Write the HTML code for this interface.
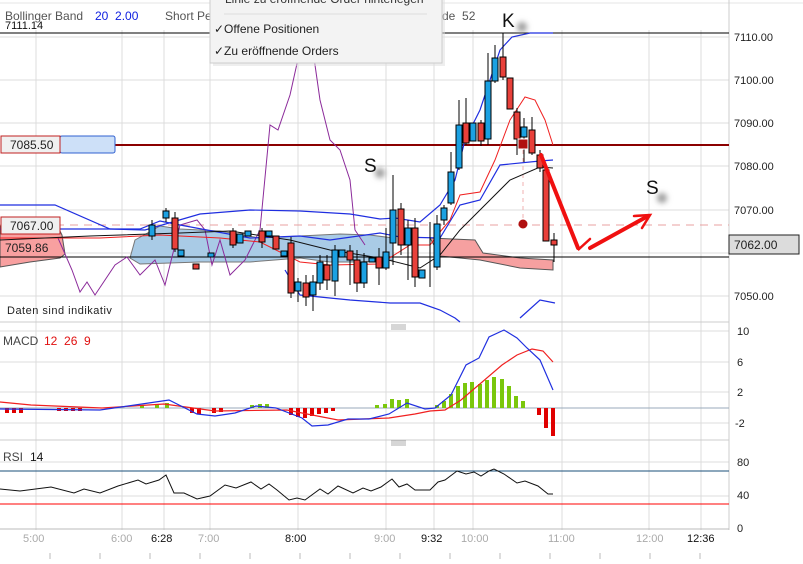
<!DOCTYPE html>
<html><head><meta charset="utf-8"><style>
html,body{margin:0;padding:0;background:#fff;}
body{width:803px;height:559px;overflow:hidden;position:relative;font-family:"Liberation Sans",sans-serif;}
svg text{font-family:"Liberation Sans",sans-serif;}
</style></head><body>
<svg width="803" height="559" viewBox="0 0 803 559" xmlns="http://www.w3.org/2000/svg">
<defs><filter id="bl" x="-1" y="-1" width="3" height="3"><feGaussianBlur stdDeviation="3"/></filter></defs>
<rect width="803" height="559" fill="#fff"/>
<line x1="0" y1="3" x2="803" y2="3" stroke="#e4e4e4"/>
<g stroke="#dcdcdc" stroke-width="1">
<line x1="36" y1="30" x2="36" y2="530"/><line x1="122" y1="30" x2="122" y2="530"/><line x1="164" y1="30" x2="164" y2="530"/><line x1="210" y1="30" x2="210" y2="530"/><line x1="298" y1="30" x2="298" y2="530"/><line x1="386" y1="30" x2="386" y2="530"/><line x1="434" y1="30" x2="434" y2="530"/><line x1="473" y1="30" x2="473" y2="530"/><line x1="562" y1="30" x2="562" y2="530"/><line x1="649" y1="30" x2="649" y2="530"/><line x1="701" y1="30" x2="701" y2="530"/>
<line x1="0" y1="37" x2="729" y2="37"/><line x1="0" y1="80" x2="729" y2="80"/><line x1="0" y1="123" x2="729" y2="123"/><line x1="0" y1="166" x2="729" y2="166"/><line x1="0" y1="210" x2="729" y2="210"/><line x1="0" y1="253" x2="729" y2="253"/><line x1="0" y1="296" x2="729" y2="296"/>
<line x1="0" y1="331" x2="729" y2="331"/><line x1="0" y1="362" x2="729" y2="362"/><line x1="0" y1="392" x2="729" y2="392"/><line x1="0" y1="423" x2="729" y2="423"/>
<line x1="0" y1="462" x2="729" y2="462"/><line x1="0" y1="496" x2="729" y2="496"/>
</g>
<line x1="729" y1="0" x2="729" y2="530" stroke="#ccc"/>
<line x1="0" y1="322" x2="729" y2="322" stroke="#ccc"/><line x1="0" y1="440" x2="729" y2="440" stroke="#ccc"/>
<line x1="0" y1="529" x2="729" y2="529" stroke="#bbb"/>
<g stroke="#999" stroke-width="0.8"><line x1="391" y1="325" x2="406" y2="325"/><line x1="391" y1="327" x2="406" y2="327"/><line x1="391" y1="329" x2="406" y2="329"/><line x1="391" y1="441" x2="406" y2="441"/><line x1="391" y1="443" x2="406" y2="443"/><line x1="391" y1="445" x2="406" y2="445"/></g>

<polygon points="0,225 30,224 60,231 62,235 65,254 60,258 30,262 0,267" fill="#f8a0a0" stroke="#555" stroke-width="1"/>
<polygon points="135,240 160,226 180,229 220,231 260,238 300,236 340,234 370,235 393,238 393,260 360,262 330,262 300,258 250,262 200,262 140,264 130,258" fill="#a9cbe6" stroke="#777" stroke-width="1"/>
<polygon points="430,238 475,240 483,253 520,258 553,260 553,270 520,268 480,260 440,256" fill="#f6a0a0" stroke="#555"/>
<line x1="0" y1="33" x2="729" y2="33" stroke="#000"/>
<line x1="0" y1="257" x2="729" y2="257" stroke="#000"/>
<line x1="0" y1="225" x2="729" y2="225" stroke="#e8a0a0" stroke-dasharray="8,6"/>
<line x1="115" y1="145" x2="729" y2="145" stroke="#8b0000" stroke-width="2"/>
<line x1="523" y1="150" x2="523" y2="225" stroke="#f0b0b0" stroke-dasharray="4,4"/>
<polyline fill="none" stroke="#8b2a9a" stroke-width="1" points="58,238 72,270 80,292 87,282 95,295 115,265 127,257 140,275 155,260 165,285 180,225 197,220 205,230 212,265 220,240 230,275 245,260 250,250 260,230 270,125 278,130 290,95 300,50 305,55 310,30 320,100 330,140 340,150 350,180 355,230 365,245"/>
<polyline fill="none" stroke="#1f2ee0" stroke-width="1.2" points="0,205 55,205 110,229 145,230 200,214 250,210 300,211 350,214 380,219 395,218 420,222 440,205 455,180 465,140 480,110 490,80 500,50 512,37 530,33 553,33"/>
<polyline fill="none" stroke="#1f2ee0" stroke-width="1.2" points="0,229 140,229 160,221 180,225 250,238 300,236 330,240 380,233 400,237 440,238 460,205 480,200 500,165 540,161 553,160"/>
<polyline fill="none" stroke="#1f2ee0" stroke-width="1.2" points="285,270 300,295 350,300 390,303 420,303 440,310 455,318 460,322"/>
<polyline fill="none" stroke="#1f2ee0" stroke-width="1.2" points="520,318 540,300 555,303"/>
<polyline fill="none" stroke="#f02020" stroke-width="1" points="0,238 100,238 160,235 220,238 260,242 300,262 330,265 380,264 410,245 430,245 440,232 450,220 460,195 480,192 495,160 510,120 525,97 535,100 545,120 553,145"/>
<polyline fill="none" stroke="#111" stroke-width="1" points="0,240 90,236 180,233 230,231 290,240 330,250 380,258 420,268 440,255 460,230 490,200 510,180 540,167 553,168"/>
<g stroke="#000" stroke-width="1">
<line x1="166" y1="208" x2="166" y2="222"/><rect x="163" y="211" width="6" height="7" fill="#1ba1e2"/>
<line x1="175" y1="212" x2="175" y2="252"/><rect x="172" y="218" width="6" height="31" fill="#e8403a"/>
<line x1="152" y1="220" x2="152" y2="240"/><rect x="149" y="225" width="6" height="11" fill="#1ba1e2"/>
<rect x="178" y="250" width="6" height="6" fill="#1ba1e2"/>
<rect x="193" y="264" width="6" height="5" fill="#e8403a"/>
<rect x="208" y="253" width="6" height="4" fill="#1ba1e2"/>
<line x1="233" y1="228" x2="233" y2="248"/><rect x="230" y="231" width="6" height="14" fill="#e8403a"/>
<rect x="237" y="234" width="6" height="9" fill="#1ba1e2"/>
<rect x="245" y="231" width="6" height="5" fill="#1ba1e2"/>
<line x1="262" y1="228" x2="262" y2="248"/><rect x="259" y="231" width="6" height="11" fill="#e8403a"/>
<rect x="266" y="231" width="6" height="5" fill="#1ba1e2"/>
<rect x="273" y="236" width="6" height="13" fill="#e8403a"/>
<rect x="281" y="251" width="6" height="5" fill="#1ba1e2"/>
<line x1="291" y1="237" x2="291" y2="298"/><rect x="288" y="243" width="6" height="50" fill="#e8403a"/>
<line x1="298" y1="278" x2="298" y2="302"/><rect x="295" y="282" width="6" height="9" fill="#1ba1e2"/>
<line x1="306" y1="275" x2="306" y2="306"/><rect x="303" y="283" width="6" height="14" fill="#e8403a"/>
<line x1="313" y1="275" x2="313" y2="311"/><rect x="310" y="282" width="6" height="13" fill="#1ba1e2"/>
<line x1="320" y1="255" x2="320" y2="290"/><rect x="317" y="262" width="6" height="21" fill="#1ba1e2"/>
<line x1="327" y1="255" x2="327" y2="290"/><rect x="324" y="265" width="6" height="15" fill="#e8403a"/>
<line x1="335" y1="245" x2="335" y2="296"/><rect x="332" y="250" width="6" height="31" fill="#1ba1e2"/>
<rect x="339" y="250" width="6" height="7" fill="#1ba1e2"/>
<line x1="350" y1="245" x2="350" y2="285"/><rect x="347" y="251" width="6" height="9" fill="#e8403a"/>
<line x1="357" y1="250" x2="357" y2="292"/><rect x="354" y="260" width="6" height="23" fill="#e8403a"/>
<line x1="364" y1="253" x2="364" y2="288"/><rect x="361" y="262" width="6" height="21" fill="#1ba1e2"/>
<rect x="369" y="258" width="6" height="4" fill="#1ba1e2"/>
<line x1="379" y1="248" x2="379" y2="285"/><rect x="376" y="257" width="6" height="11" fill="#e8403a"/>
<line x1="386" y1="228" x2="386" y2="270"/><rect x="383" y="252" width="6" height="16" fill="#1ba1e2"/>
<line x1="393" y1="175" x2="393" y2="265"/><rect x="390" y="210" width="6" height="33" fill="#1ba1e2"/>
<line x1="401" y1="203" x2="401" y2="255"/><rect x="398" y="209" width="6" height="36" fill="#e8403a"/>
<line x1="408" y1="220" x2="408" y2="280"/><rect x="405" y="228" width="6" height="17" fill="#1ba1e2"/>
<line x1="415" y1="218" x2="415" y2="287"/><rect x="412" y="228" width="6" height="49" fill="#e8403a"/>
<rect x="419" y="270" width="6" height="8" fill="#1ba1e2"/>
<line x1="430" y1="222" x2="430" y2="287"/>
<line x1="437" y1="215" x2="437" y2="270"/><rect x="434" y="224" width="6" height="43" fill="#1ba1e2"/>
<line x1="444" y1="205" x2="444" y2="225"/><rect x="441" y="208" width="6" height="12" fill="#1ba1e2"/>
<line x1="451" y1="152" x2="451" y2="205"/><rect x="448" y="172" width="6" height="31" fill="#1ba1e2"/>
<line x1="459" y1="100" x2="459" y2="170"/><rect x="456" y="125" width="6" height="43" fill="#1ba1e2"/>
<line x1="466" y1="98" x2="466" y2="145"/><rect x="463" y="123" width="6" height="20" fill="#e8403a"/>
<rect x="470" y="123" width="6" height="18" fill="#1ba1e2"/>
<line x1="481" y1="120" x2="481" y2="146"/><rect x="478" y="123" width="6" height="18" fill="#e8403a"/>
<line x1="488" y1="53" x2="488" y2="145"/><rect x="485" y="81" width="6" height="58" fill="#1ba1e2"/>
<line x1="495" y1="45" x2="495" y2="83"/><rect x="492" y="58" width="6" height="23" fill="#1ba1e2"/>
<line x1="503" y1="33" x2="503" y2="80"/><rect x="500" y="57" width="6" height="20" fill="#e8403a"/>
<rect x="507" y="78" width="6" height="31" fill="#e8403a"/>
<line x1="517" y1="108" x2="517" y2="155"/><rect x="514" y="112" width="6" height="27" fill="#e8403a"/>
<line x1="524" y1="118" x2="524" y2="162"/><rect x="521" y="127" width="6" height="10" fill="#1ba1e2"/>
<line x1="532" y1="117" x2="532" y2="155"/><rect x="529" y="130" width="6" height="23" fill="#e8403a"/>
<line x1="540" y1="150" x2="540" y2="172"/><rect x="537" y="155" width="6" height="13" fill="#e8403a"/>
<rect x="543" y="170" width="6" height="71" fill="#e8403a"/>
<line x1="554" y1="233" x2="554" y2="262"/><rect x="551" y="240" width="6" height="5" fill="#e8403a"/>
</g>
<rect x="518" y="139" width="10" height="10" fill="#b01010" stroke="#fff"/>
<circle cx="523" cy="224" r="4.5" fill="#b01010"/>
<g stroke="#f01010" stroke-width="4" fill="none" stroke-linecap="round">
<line x1="541" y1="155" x2="578" y2="248"/><polyline points="573,234 579,249 590,239" stroke-width="2.5"/>
<line x1="590" y1="248" x2="648" y2="216"/><polyline points="634,216 650,215 642,228" stroke-width="2.5"/>
</g>
<circle cx="380" cy="173" r="5" fill="#999" filter="url(#bl)"/><text x="364" y="172" font-size="19" fill="#111">S</text>
<circle cx="662" cy="198" r="5" fill="#999" filter="url(#bl)"/><text x="646" y="194" font-size="19" fill="#111">S</text>
<circle cx="522" cy="27" r="5" fill="#999" filter="url(#bl)"/><text x="502" y="27" font-size="19" fill="#111">K</text>
<rect x="60" y="136" width="55" height="17" rx="2" fill="#cde0f8" stroke="#3060d0"/>
<rect x="1" y="136" width="59" height="17" fill="#f0f0f0" stroke="#c02020"/>
<text x="10" y="149" font-size="12" fill="#222">7085.50</text>
<rect x="1" y="217" width="59" height="17" fill="#f0f0f0" stroke="#c02020"/>
<text x="10" y="230" font-size="12" fill="#222">7067.00</text>
<text x="5" y="252" font-size="12" fill="#222">7059.86</text>
<text x="5" y="29" font-size="11" fill="#111">7111.14</text>
<text x="7" y="314" font-size="11" fill="#222" letter-spacing="0.5">Daten sind indikativ</text>
<g font-size="11" fill="#222">
<text x="734" y="41">7110.00</text><text x="734" y="84">7100.00</text><text x="734" y="127">7090.00</text><text x="734" y="170">7080.00</text><text x="734" y="214">7070.00</text><text x="734" y="300">7050.00</text>
<text x="737" y="335">10</text><text x="737" y="366">6</text><text x="737" y="396">2</text><text x="735" y="427">-2</text>
<text x="737" y="466">80</text><text x="737" y="499">40</text><text x="737" y="532">0</text>
</g>
<rect x="729" y="235" width="70" height="19" fill="#dcdcdc" stroke="#222"/>
<text x="734" y="249" font-size="12" fill="#222">7062.00</text>
<text x="5" y="20" font-size="12" fill="#555">Bollinger Band</text>
<text x="95" y="20" font-size="12" fill="#1020e0">20&#160;&#160;2.00</text>
<text x="165" y="20" font-size="12" fill="#555">Short Pe</text>
<text x="442" y="20" font-size="12" fill="#555">de&#160;&#160;52</text>
<rect x="213" y="-2" width="232" height="68" fill="#ddd" opacity="0.5"/>
<rect x="210" y="-2" width="232" height="65" fill="#f3f3f3" stroke="#ccc"/>
<text x="225" y="3" font-size="12" fill="#333">Linie zu eröffnende Order hinterlegen</text>
<line x1="224" y1="14" x2="427" y2="14" stroke="#ddd"/>
<text x="214" y="33" font-size="12" fill="#222">✓Offene Positionen</text>
<text x="214" y="55" font-size="12" fill="#222">✓Zu eröffnende Orders</text>

<text x="3" y="345" font-size="12" fill="#444">MACD</text><text x="44" y="345" font-size="12" fill="#e01010">12&#160;&#160;26&#160;&#160;9</text>
<line x1="0" y1="408" x2="729" y2="408" stroke="#9ab"/>
<g fill="#e00000">
<rect x="5" y="408" width="4" height="5"/><rect x="12" y="408" width="4" height="5"/><rect x="19" y="408" width="4" height="5"/>
<rect x="57" y="408" width="4" height="3"/><rect x="64" y="408" width="4" height="3"/><rect x="71" y="408" width="4" height="3"/><rect x="78" y="408" width="4" height="3"/>
<rect x="190" y="408" width="4" height="5"/><rect x="197" y="408" width="4" height="6"/><rect x="212" y="408" width="4" height="5"/><rect x="219" y="408" width="4" height="4"/>
<rect x="289" y="408" width="4" height="7"/><rect x="296" y="408" width="4" height="9"/><rect x="303" y="408" width="4" height="10"/><rect x="310" y="408" width="4" height="8"/><rect x="317" y="408" width="4" height="6"/><rect x="324" y="408" width="4" height="5"/><rect x="331" y="408" width="4" height="3"/>
<rect x="537" y="408" width="4" height="7"/><rect x="544" y="408" width="4" height="20"/><rect x="551" y="408" width="4" height="28"/>
</g>
<g fill="#7ac70c">
<rect x="140" y="405" width="4" height="3"/><rect x="155" y="404" width="4" height="4"/><rect x="165" y="403" width="4" height="5"/>
<rect x="250" y="405" width="4" height="3"/><rect x="258" y="404" width="4" height="4"/><rect x="265" y="404" width="4" height="4"/>
<rect x="375" y="405" width="4" height="3"/><rect x="383" y="404" width="4" height="4"/><rect x="390" y="399" width="4" height="9"/><rect x="397" y="400" width="4" height="8"/><rect x="405" y="399" width="4" height="9"/>
<rect x="435" y="405" width="4" height="3"/><rect x="442" y="401" width="4" height="7"/><rect x="449" y="394" width="4" height="14"/><rect x="456" y="386" width="4" height="22"/><rect x="463" y="383" width="4" height="25"/><rect x="470" y="382" width="4" height="26"/><rect x="478" y="384" width="4" height="24"/><rect x="485" y="380" width="4" height="28"/><rect x="492" y="377" width="4" height="31"/><rect x="500" y="379" width="4" height="29"/><rect x="507" y="386" width="4" height="22"/><rect x="514" y="396" width="4" height="12"/><rect x="521" y="401" width="4" height="7"/>
</g>
<polyline fill="none" stroke="#f02020" stroke-width="1.2" points="0,402 31,405 102,408 164,404 215,411 287,410 307,414 338,420 389,418 415,414 430,411 445,410 461,400 481,383 502,365 517,355 532,349 543,351 553,362"/>
<polyline fill="none" stroke="#2030e0" stroke-width="1.2" points="0,409 100,410 135,405 169,400 197,414 215,416 235,413 256,406 276,408 302,418 312,426 328,425 348,419 369,419 389,414 407,403 425,409 435,408 451,395 466,365 479,358 489,337 504,330 517,338 527,348 540,360 553,390"/>
<text x="3" y="461" font-size="12" fill="#444">RSI</text><text x="30" y="461" font-size="12" fill="#111">14</text>
<line x1="0" y1="471" x2="729" y2="471" stroke="#1a4f7a"/>
<line x1="0" y1="504" x2="729" y2="504" stroke="#f00"/>
<polyline fill="none" stroke="#111" stroke-width="1" points="0,489 20,491 51,487 74,493 84,489 100,493 118,486 138,480 146,484 159,480 166,475 174,493 184,493 197,499 210,496 225,485 236,488 251,482 261,489 269,484 277,490 289,500 297,498 305,500 320,489 328,494 338,486 353,493 363,488 371,491 381,487 392,479 399,487 407,484 415,490 430,490 438,482 445,480 457,471 466,474 474,472 481,476 489,471 494,469 504,474 517,483 525,481 538,486 548,494 553,494"/>
<g font-size="11" fill="#aaa">
<text x="23" y="542">5:00</text><text x="111" y="542">6:00</text><text x="198" y="542">7:00</text><text x="374" y="542">9:00</text><text x="461" y="542">10:00</text><text x="548" y="542">11:00</text><text x="636" y="542">12:00</text>
</g>
<g font-size="11" fill="#111">
<text x="151" y="542">6:28</text><text x="285" y="542">8:00</text><text x="421" y="542">9:32</text><text x="687" y="542">12:36</text>
</g>
<g stroke="#bbb"><line x1="50" y1="553" x2="50" y2="559"/><line x1="100" y1="553" x2="100" y2="559"/><line x1="150" y1="553" x2="150" y2="559"/><line x1="200" y1="553" x2="200" y2="559"/><line x1="250" y1="553" x2="250" y2="559"/><line x1="300" y1="553" x2="300" y2="559"/><line x1="350" y1="553" x2="350" y2="559"/><line x1="400" y1="553" x2="400" y2="559"/><line x1="450" y1="553" x2="450" y2="559"/><line x1="500" y1="553" x2="500" y2="559"/><line x1="550" y1="553" x2="550" y2="559"/><line x1="600" y1="553" x2="600" y2="559"/><line x1="650" y1="553" x2="650" y2="559"/><line x1="700" y1="553" x2="700" y2="559"/></g>
</svg>
</body></html>
